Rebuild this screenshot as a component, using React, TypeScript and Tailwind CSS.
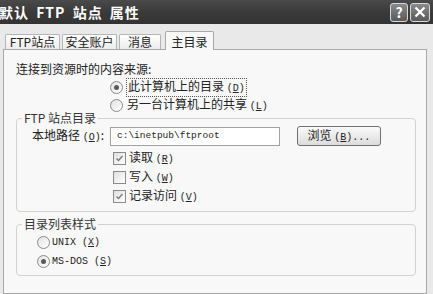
import React from "react";

const cjk = { fontFamily: '"Noto Sans CJK SC", "Noto Sans", sans-serif' };
const mono = { fontFamily: '"Liberation Mono", "Noto Sans CJK SC", monospace' };

function Mn({ k }: { k: string }) {
  return (
    <span style={mono} className="text-[10px]">
      (<u>{k}</u>)
    </span>
  );
}

function Radio({ on }: { on?: boolean }) {
  return (
    <span className="w-[13px] h-[13px] rounded-full border border-[#8a8a8a] bg-gradient-to-br from-[#e2e2e2] to-white flex items-center justify-center shrink-0">
      {on && <span className="w-[5px] h-[5px] rounded-full bg-[#5a5a5a]" />}
    </span>
  );
}

function Check({ on }: { on?: boolean }) {
  return (
    <span className="w-[13px] h-[13px] border border-[#8a8a8a] bg-gradient-to-br from-[#e0e0e0] to-white flex items-center justify-center shrink-0">
      {on && (
        <svg width="9" height="9" viewBox="0 0 9 9">
          <path d="M1.5 4.5 L3.5 6.5 L7.5 2" stroke="#7a7a7a" strokeWidth="1.4" fill="none" />
        </svg>
      )}
    </span>
  );
}

function Group({ title, h, children }: { title: string; h: number; children: React.ReactNode }) {
  return (
    <div
      className="relative ml-[12px] w-[400px] border border-[#d2d2d2] rounded-[4px]"
      style={{ height: h }}
    >
      <span className="absolute -top-[9px] left-[5px] px-[2px] bg-[#f8f8f8] text-[12px] leading-[16px] text-[#333]">
        {title}
      </span>
      {children}
    </div>
  );
}

export default function App() {
  return (
    <div style={cjk} className="w-[433px] h-[294px] overflow-hidden flex flex-col bg-[#e9e9e9] text-[#222]">
      {/* title bar */}
      <div className="h-[24px] shrink-0 flex items-center justify-between bg-gradient-to-b from-[#4a4a4a] via-[#3a3a3a] to-[#333] pr-[3px]">
        <span className="-ml-[1px] text-white font-bold text-[14px] tracking-[1px] [word-spacing:3px] whitespace-pre">
          默认 FTP 站点 属性
        </span>
        <div className="flex gap-[2px]">
          <div className="w-[18px] h-[19px] rounded-[3px] border border-[#d8d8d8] bg-gradient-to-b from-[#8a8a8a] to-[#5a5a5a] flex items-center justify-center text-white font-bold text-[14px] leading-none">
            ?
          </div>
          <div className="w-[20px] h-[19px] rounded-[3px] border border-[#d8d8d8] bg-gradient-to-b from-[#8a8a8a] to-[#5a5a5a] flex items-center justify-center">
            <svg width="12" height="12" viewBox="0 0 12 12">
              <path d="M1.5 1.5 L10.5 10.5 M10.5 1.5 L1.5 10.5" stroke="white" strokeWidth="2.2" />
            </svg>
          </div>
        </div>
      </div>

      {/* tabs */}
      <div className="h-[25px] shrink-0 flex items-end pl-[5px] gap-[2px] text-[12px]">
        <div className="w-[55px] h-[15px] border border-b-0 border-[#b5b5b5] rounded-t-[2px] bg-gradient-to-b from-white to-[#ececec] flex items-center justify-center">
          FTP站点
        </div>
        <div className="w-[55px] h-[15px] border border-b-0 border-[#b5b5b5] rounded-t-[2px] bg-gradient-to-b from-white to-[#ececec] flex items-center justify-center">
          安全账户
        </div>
        <div className="w-[42px] h-[15px] border border-b-0 border-[#b5b5b5] rounded-t-[2px] bg-gradient-to-b from-white to-[#ececec] flex items-center justify-center">
          消息
        </div>
        <div className="ml-[2px] w-[49px] h-[19px] -mb-[1px] relative z-10 border border-b-0 border-[#a8a8a8] rounded-t-[2px] bg-[#f8f8f8] flex items-start pt-[1px] justify-center">
          主目录
        </div>
      </div>

      {/* panel */}
      <div className="flex-1 flex pl-[3px] pr-[3px]">
        <div className="w-[424px] border border-[#a8a8a8] bg-[#f8f8f8] text-[12px] leading-[16px]">
          <div className="mt-[11px] ml-[12px] h-[16px]">连接到资源时的内容来源:</div>
          <div className="mt-[2px] h-[16px] flex items-center pl-[106px] gap-[3px]">
            <Radio on />
            <span className="border border-dotted border-[#555] px-[1px] leading-[14px]">
              此计算机上的目录 <Mn k="D" />
            </span>
          </div>
          <div className="mt-[2px] h-[16px] flex items-center pl-[106px] gap-[4px]">
            <Radio />
            <span>
              另一台计算机上的共享 <Mn k="L" />
            </span>
          </div>

          <div className="mt-[5px]">
            <Group title="FTP 站点目录" h={94}>
              <div className="mt-[7px] flex items-center h-[20px]">
                <span className="pl-[15px] w-[93px]">
                  本地路径 <Mn k="O" />:
                </span>
                <div className="w-[170px] h-[19px] border border-[#a0a0a0] bg-white flex items-center pl-[6px]">
                  <span style={mono} className="text-[9.5px] text-[#222]">
                    c:\inetpub\ftproot
                  </span>
                </div>
                <div className="ml-[17px] w-[84px] h-[20px] rounded-[3px] border border-[#707070] bg-gradient-to-b from-[#fafafa] to-[#dcdcdc] flex items-center justify-center">
                  <span>
                    浏览 <Mn k="B" />
                    <span style={mono} className="text-[10px]">...</span>
                  </span>
                </div>
              </div>
              <div className="mt-[3px] flex flex-col pl-[96px]">
                {[
                  { t: "读取", k: "R", on: true },
                  { t: "写入", k: "W", on: false },
                  { t: "记录访问", k: "V", on: true },
                ].map((c) => (
                  <div key={c.t} className="h-[19px] flex items-center gap-[3px]">
                    <Check on={c.on} />
                    <span>
                      {c.t} <Mn k={c.k} />
                    </span>
                  </div>
                ))}
              </div>
            </Group>
          </div>

          <div className="mt-[12px]">
            <Group title="目录列表样式" h={52}>
              <div className="mt-[8px] flex flex-col pl-[20px]">
                <div className="h-[19px] flex items-center gap-[2px]">
                  <Radio />
                  <span style={mono} className="text-[10px]">
                    UNIX (<u>X</u>)
                  </span>
                </div>
                <div className="h-[19px] flex items-center gap-[2px]">
                  <Radio on />
                  <span style={mono} className="text-[10px]">
                    MS-DOS (<u>S</u>)
                  </span>
                </div>
              </div>
            </Group>
          </div>
        </div>
      </div>
    </div>
  );
}
